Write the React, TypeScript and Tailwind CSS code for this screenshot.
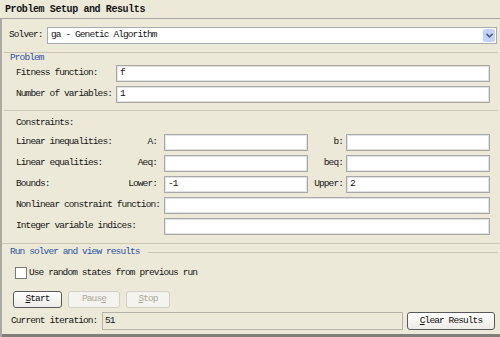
import React from "react";

const font = { fontFamily: '"Liberation Mono", "DejaVu Sans Mono", monospace' };

const Field = ({ value = "", className = "" }: { value?: string; className?: string }) => (
    <div className={`h-[17px] bg-white border border-[#a8a8a8] shadow-[inset_0_0_0_1px_#e2e2e2] flex items-center pl-[3px] text-[#111] ${className}`}>
        {value}
    </div>
);

const Line = ({ className = "" }: { className?: string }) => (
    <div className={`h-px bg-[#c9c6b6] ${className}`} />
);

const PairRow = ({ label, a, b, av = "", bv = "" }: { label: string; a: string; b: string; av?: string; bv?: string }) => (
    <div className="flex items-center h-[17px] pl-[14px]">
        <div className="w-[141px] flex justify-between">
            <span>{label}</span>
            <span>{a}</span>
        </div>
        <Field value={av} className="ml-[7px] w-[144px]" />
        <div className="w-[35px] text-right">{b}</div>
        <Field value={bv} className="ml-[3px] w-[144px]" />
    </div>
);

const WideRow = ({ label }: { label: string }) => (
    <div className="flex items-center h-[17px] pl-[14px]">
        <span className="w-[148px]">{label}</span>
        <Field className="w-[326px]" />
    </div>
);

const Button = ({ children, disabled = false, className = "" }: { children: React.ReactNode; disabled?: boolean; className?: string }) => (
    <div
        className={`h-[17px] flex items-center justify-center rounded-[3px] border ${
            disabled
                ? "border-[#d2d0c4] bg-[#f4f3ee] text-[#aca899]"
                : "border-[#5a5a5a] bg-gradient-to-b from-white to-[#ecebe6] text-[#111]"
        } ${className}`}
    >
        {children}
    </div>
);

export default function App() {
    return (
        <div className="w-[500px] h-[337px] bg-[#ece9d8] overflow-hidden text-[9.5px] tracking-[-0.9px] text-[#151515] flex flex-col" style={font}>
            {/* title */}
            <div className="h-[19px] flex items-center pl-[5px] text-[10px] tracking-[-0.4px] font-bold border-b border-[#a7a6a0]">
                Problem Setup and Results
            </div>

            <div className="flex-1 border-l-2 border-[#a9a8a2] flex flex-col">
                {/* solver */}
                <div className="flex items-center mt-[8px] h-[17px] pl-[7px] pr-[3px]">
                    <span className="w-[38px]">Solver:</span>
                    <div className="flex-1 h-[17px] bg-white border border-[#a5acb2] flex items-center justify-between pl-[3px] pr-[1px]">
                        <span>ga - Genetic Algorithm</span>
                        <div className="w-[12px] h-[13px] bg-[#c3d3f7] rounded-[2px] flex items-center justify-center">
                            <svg width="7" height="5" viewBox="0 0 7 5">
                                <path d="M0.5 0.8 L3.5 3.8 L6.5 0.8" stroke="#4d6185" strokeWidth="1.6" fill="none" />
                            </svg>
                        </div>
                    </div>
                </div>

                {/* problem group */}
                <Line className="mt-[8px] mx-[2px]" />
                <div className="pl-[8px] h-[10px] leading-[10px] text-[#2d53a0]">Problem</div>
                <div className="flex flex-col gap-[4px] mt-[2px]">
                    <div className="flex items-center h-[17px] pl-[14px]">
                        <span className="w-[100px]">Fitness function:</span>
                        <Field value="f" className="w-[374px]" />
                    </div>
                    <div className="flex items-center h-[17px] pl-[14px]">
                        <span className="w-[100px]">Number of variables:</span>
                        <Field value="1" className="w-[374px]" />
                    </div>
                </div>

                <Line className="mt-[7px] mx-[2px]" />
                <div className="pl-[14px] mt-[7px] h-[10px] leading-[10px]">Constraints:</div>

                <div className="flex flex-col gap-[4px] mt-[6px]">
                    <PairRow label="Linear inequalities:" a="A:" b="b:" />
                    <PairRow label="Linear equalities:" a="Aeq:" b="beq:" />
                    <PairRow label="Bounds:" a="Lower:" b="Upper:" av="-1" bv="2" />
                    <WideRow label="Nonlinear constraint function:" />
                    <WideRow label="Integer variable indices:" />
                </div>

                <Line className="mt-[8px]" />

                {/* run group */}
                <div className="flex items-center mt-[3px] h-[10px] pl-[8px] pr-[2px]">
                    <span className="text-[#2d53a0] leading-[10px]">Run solver and view results</span>
                    <div className="flex-1 h-px bg-[#c9c6b6] ml-[8px]" />
                </div>

                <div className="flex items-center mt-[10px] pl-[13px] h-[12px]">
                    <div className="w-[12px] h-[12px] bg-white border border-[#7a7a7a]" />
                    <span className="ml-[2px]">Use random states from previous run</span>
                </div>

                <div className="flex mt-[12px] pl-[11px] gap-[6px]">
                    <Button className="w-[49px]">
                        <span className="underline">S</span>tart
                    </Button>
                    <Button disabled className="w-[52px]">
                        Paus<span className="underline">e</span>
                    </Button>
                    <Button disabled className="w-[44px]">
                        <span className="underline">S</span>top
                    </Button>
                </div>

                <div className="flex items-center mt-[4px] pl-[9px] h-[18px]">
                    <span className="w-[91px]">Current iteration:</span>
                    <div className="w-[301px] h-[18px] border border-[#b5b3a8] flex items-center pl-[2px]">51</div>
                    <Button className="ml-[4px] w-[88px] h-[18px]">
                        <span className="underline">C</span>lear Results
                    </Button>
                </div>

                <div className="mt-auto h-[3px] bg-[#7f7e78]" />
            </div>
        </div>
    );
}
